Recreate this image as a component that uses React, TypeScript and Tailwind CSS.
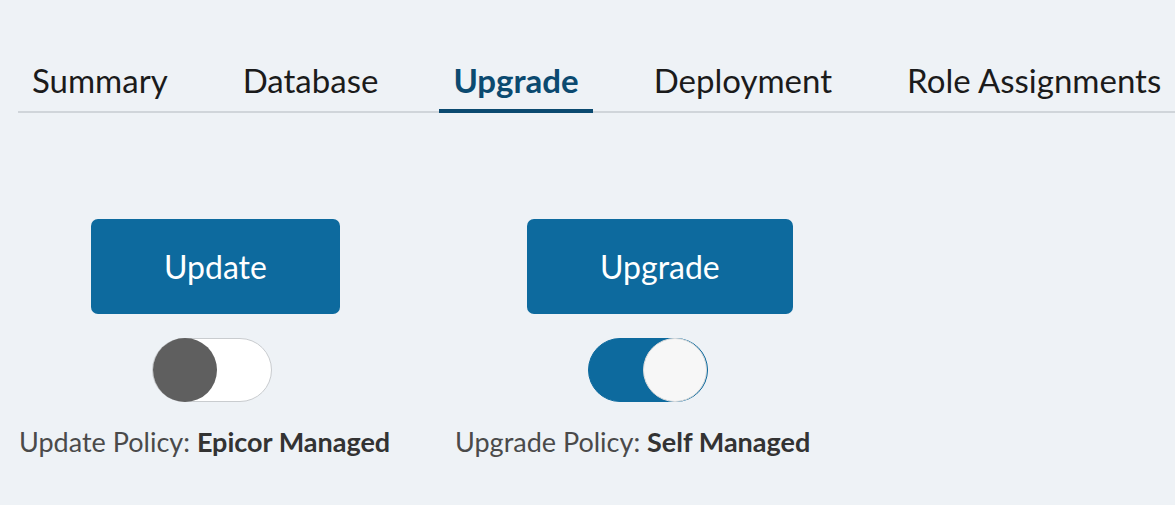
import { useState } from 'react'

const tabs = ['Summary', 'Database', 'Upgrade', 'Deployment', 'Role Assignments']

function Toggle({ on, onClick }: { on: boolean; onClick: () => void }) {
  return (
    <button
      onClick={onClick}
      className={`w-[120px] h-[64px] rounded-full flex items-center border ${
        on ? 'bg-[#0d6a9e] border-[#0d6a9e] justify-end' : 'bg-white border-[#c9cccf] justify-start'
      }`}
    >
      <span
        className={`w-[64px] h-[64px] rounded-full ${
          on ? 'bg-[#f7f7f7] border border-[#dcdcdc]' : 'bg-[#5f5f5f]'
        }`}
      />
    </button>
  )
}

export default function App() {
  const [tab, setTab] = useState('Upgrade')
  const [updateSelf, setUpdateSelf] = useState(false)
  const [upgradeSelf, setUpgradeSelf] = useState(true)

  const policies = [
    { label: 'Update', policy: 'Update Policy', self: updateSelf, toggle: () => setUpdateSelf(v => !v) },
    { label: 'Upgrade', policy: 'Upgrade Policy', self: upgradeSelf, toggle: () => setUpgradeSelf(v => !v) },
  ]

  return (
    <div className="w-full h-[505px] bg-[#eef2f6] overflow-hidden" style={{ fontFamily: 'Lato, "Open Sans", sans-serif' }}>
      {/* Tabs */}
      <div className="ml-[18px] mt-[61px] border-b-2 border-[#d0d5da] flex gap-[47px]">
        {tabs.map(t => (
          <button
            key={t}
            onClick={() => setTab(t)}
            className={`px-[14px] pb-[10px] border-b-4 -mb-[2px] text-[33px] leading-[38px] whitespace-nowrap ${
              tab === t
                ? 'border-[#0b4a70] text-[#0b4a70] font-bold'
                : 'border-transparent text-[#1b1b1b]'
            }`}
          >
            {t}
          </button>
        ))}
      </div>

      {/* Policies */}
      <div className="ml-[19px] mt-[106px] flex">
        {policies.map(p => (
          <div key={p.label} className="w-[436px] flex flex-col items-start">
            <button className="ml-[72px] h-[95px] px-[73px] rounded-[7px] bg-[#0d6a9e] text-white text-[32px]">
              {p.label}
            </button>
            <div className="ml-[133px] mt-[24px]">
              <Toggle on={p.self} onClick={p.toggle} />
            </div>
            <p className="mt-[23px] text-[27px] leading-[34px] text-[#4a4a4a] whitespace-nowrap">
              {p.policy}: <span className="font-bold text-[#333333]">{p.self ? 'Self Managed' : 'Epicor Managed'}</span>
            </p>
          </div>
        ))}
      </div>
    </div>
  )
}
